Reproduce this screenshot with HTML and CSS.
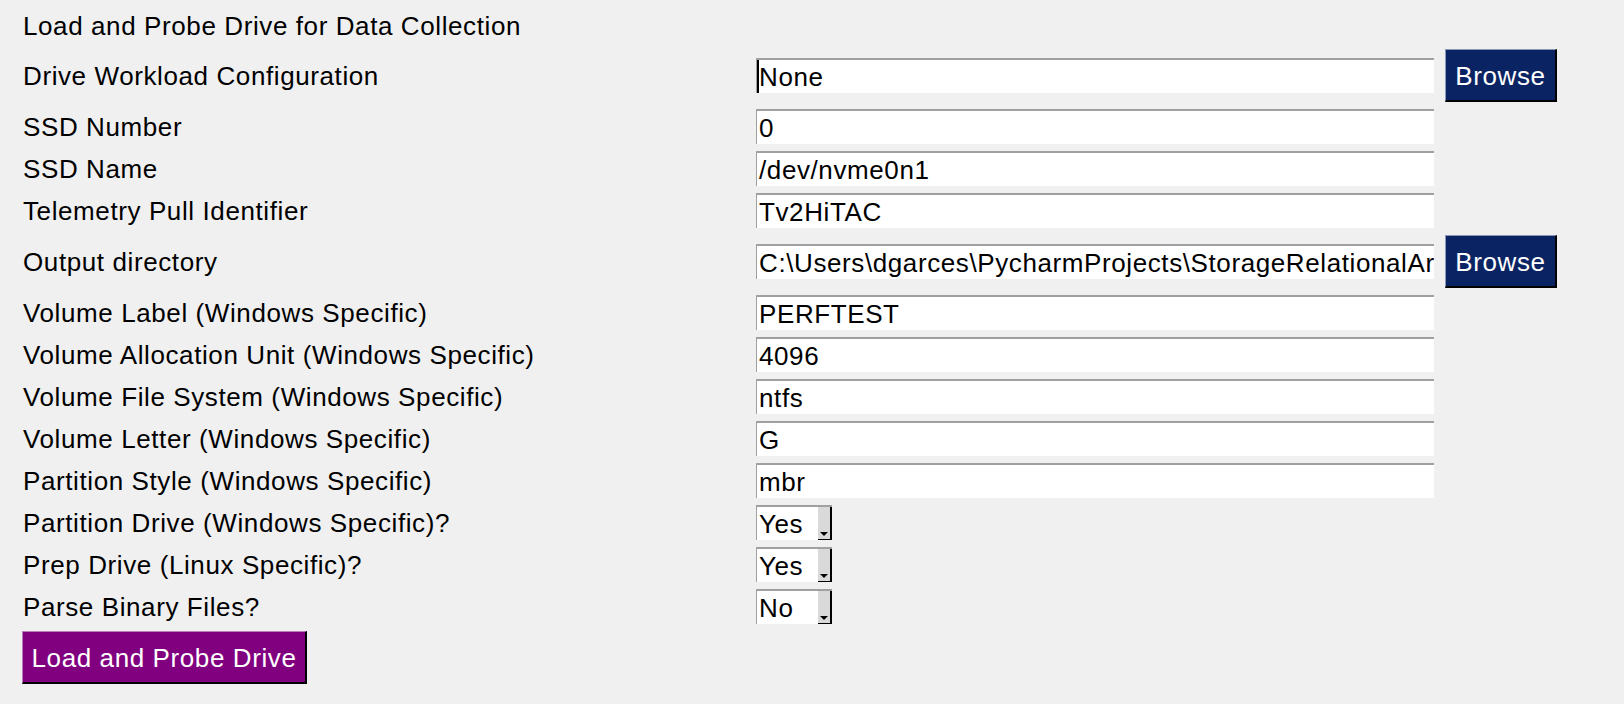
FILE: index.html
```html
<!DOCTYPE html>
<html>
<head>
<meta charset="utf-8">
<title>Load and Probe Drive for Data Collection</title>
<link rel="stylesheet" href="styles.css">
</head>
<body>
<div class="form">
  <div class="row title-row"><div class="label">Load and Probe Drive for Data Collection</div></div>
  <div class="row tall">
    <div class="label">Drive Workload Configuration</div>
    <div class="entry"><span class="caret"></span>None</div>
    <button class="browse">Browse</button>
  </div>
  <div class="row"><div class="label">SSD Number</div><div class="entry">0</div></div>
  <div class="row"><div class="label">SSD Name</div><div class="entry">/dev/nvme0n1</div></div>
  <div class="row"><div class="label">Telemetry Pull Identifier</div><div class="entry">Tv2HiTAC</div></div>
  <div class="row tall">
    <div class="label">Output directory</div>
    <div class="entry">C:\Users\dgarces\PycharmProjects\StorageRelationalAr</div>
    <button class="browse">Browse</button>
  </div>
  <div class="row"><div class="label">Volume Label (Windows Specific)</div><div class="entry">PERFTEST</div></div>
  <div class="row"><div class="label">Volume Allocation Unit (Windows Specific)</div><div class="entry">4096</div></div>
  <div class="row"><div class="label">Volume File System (Windows Specific)</div><div class="entry">ntfs</div></div>
  <div class="row"><div class="label">Volume Letter (Windows Specific)</div><div class="entry">G</div></div>
  <div class="row"><div class="label">Partition Style (Windows Specific)</div><div class="entry">mbr</div></div>
  <div class="row"><div class="label">Partition Drive (Windows Specific)?</div><div class="select"><span class="sel-text">Yes</span><span class="sel-btn"><span class="arrow"></span></span></div></div>
  <div class="row"><div class="label">Prep Drive (Linux Specific)?</div><div class="select"><span class="sel-text">Yes</span><span class="sel-btn"><span class="arrow"></span></span></div></div>
  <div class="row"><div class="label">Parse Binary Files?</div><div class="select"><span class="sel-text">No</span><span class="sel-btn"><span class="arrow"></span></span></div></div>
  <div class="row tall"><button class="run">Load and Probe Drive</button></div>
</div>
</body>
</html>
```
FILE: styles.css
```css
html, body {
  margin: 0;
  padding: 0;
  background: #f0f0f0;
}
body {
  font-family: "Liberation Sans", Arial, sans-serif;
  font-size: 26px;
  letter-spacing: 0.6px;
  color: #000;
  width: 1624px;
  height: 704px;
  overflow: hidden;
}
.form {
  display: flex;
  flex-direction: column;
  gap: 7px;
  padding-top: 9px;
}
.row {
  display: flex;
  align-items: center;
  height: 35px;
}
.title-row {
  height: 33px;
}
.row.tall {
  height: 53px;
}
.label {
  width: 733px;
  padding-left: 23px;
  padding-top: 2px;
  white-space: nowrap;
  line-height: 33px;
}
.entry {
  position: relative;
  box-sizing: border-box;
  width: 678px;
  height: 35px;
  background: #fff;
  border-top: 2px solid #a0a0a0;
  border-left: 1px solid #a0a0a0;
  padding-left: 2px;
  line-height: 34px;
  white-space: nowrap;
  overflow: hidden;
}
.caret {
  position: absolute;
  left: 0;
  top: 0;
  width: 2px;
  height: 33px;
  background: #000;
}
.browse {
  margin-left: 11px;
  box-sizing: border-box;
  width: 112px;
  height: 53px;
  padding: 2px 0 0 0;
  font-family: "Liberation Sans", Arial, sans-serif;
  font-size: 26px;
  letter-spacing: 0.6px;
  color: #fff;
  background: #0a2463;
  border-style: solid;
  border-width: 1px 2px 2px 1px;
  border-color: #8a97b8 #000 #000 #8a97b8;
}
.select {
  box-sizing: border-box;
  width: 76px;
  height: 35px;
  display: flex;
  background: #fff;
  border-top: 2px solid #a0a0a0;
  border-left: 1px solid #a0a0a0;
}
.sel-text {
  flex: 1;
  padding-left: 2px;
  line-height: 34px;
}
.sel-btn {
  position: relative;
  box-sizing: border-box;
  width: 14px;
  height: 33px;
  background: #d9d9d9;
  border-right: 2px solid #000;
  border-bottom: 1px solid #000;
}
.arrow {
  position: absolute;
  left: 2px;
  bottom: 3px;
  width: 0;
  height: 0;
  border-left: 4px solid transparent;
  border-right: 4px solid transparent;
  border-top: 4px solid #000;
}
.run {
  margin-left: 22px;
  box-sizing: border-box;
  width: 285px;
  height: 53px;
  padding: 2px 0 0 0;
  font-family: "Liberation Sans", Arial, sans-serif;
  font-size: 26px;
  letter-spacing: 0.6px;
  color: #fff;
  background: #800080;
  border-style: solid;
  border-width: 1px 2px 2px 1px;
  border-color: #b77fb7 #000 #000 #b77fb7;
}
```
